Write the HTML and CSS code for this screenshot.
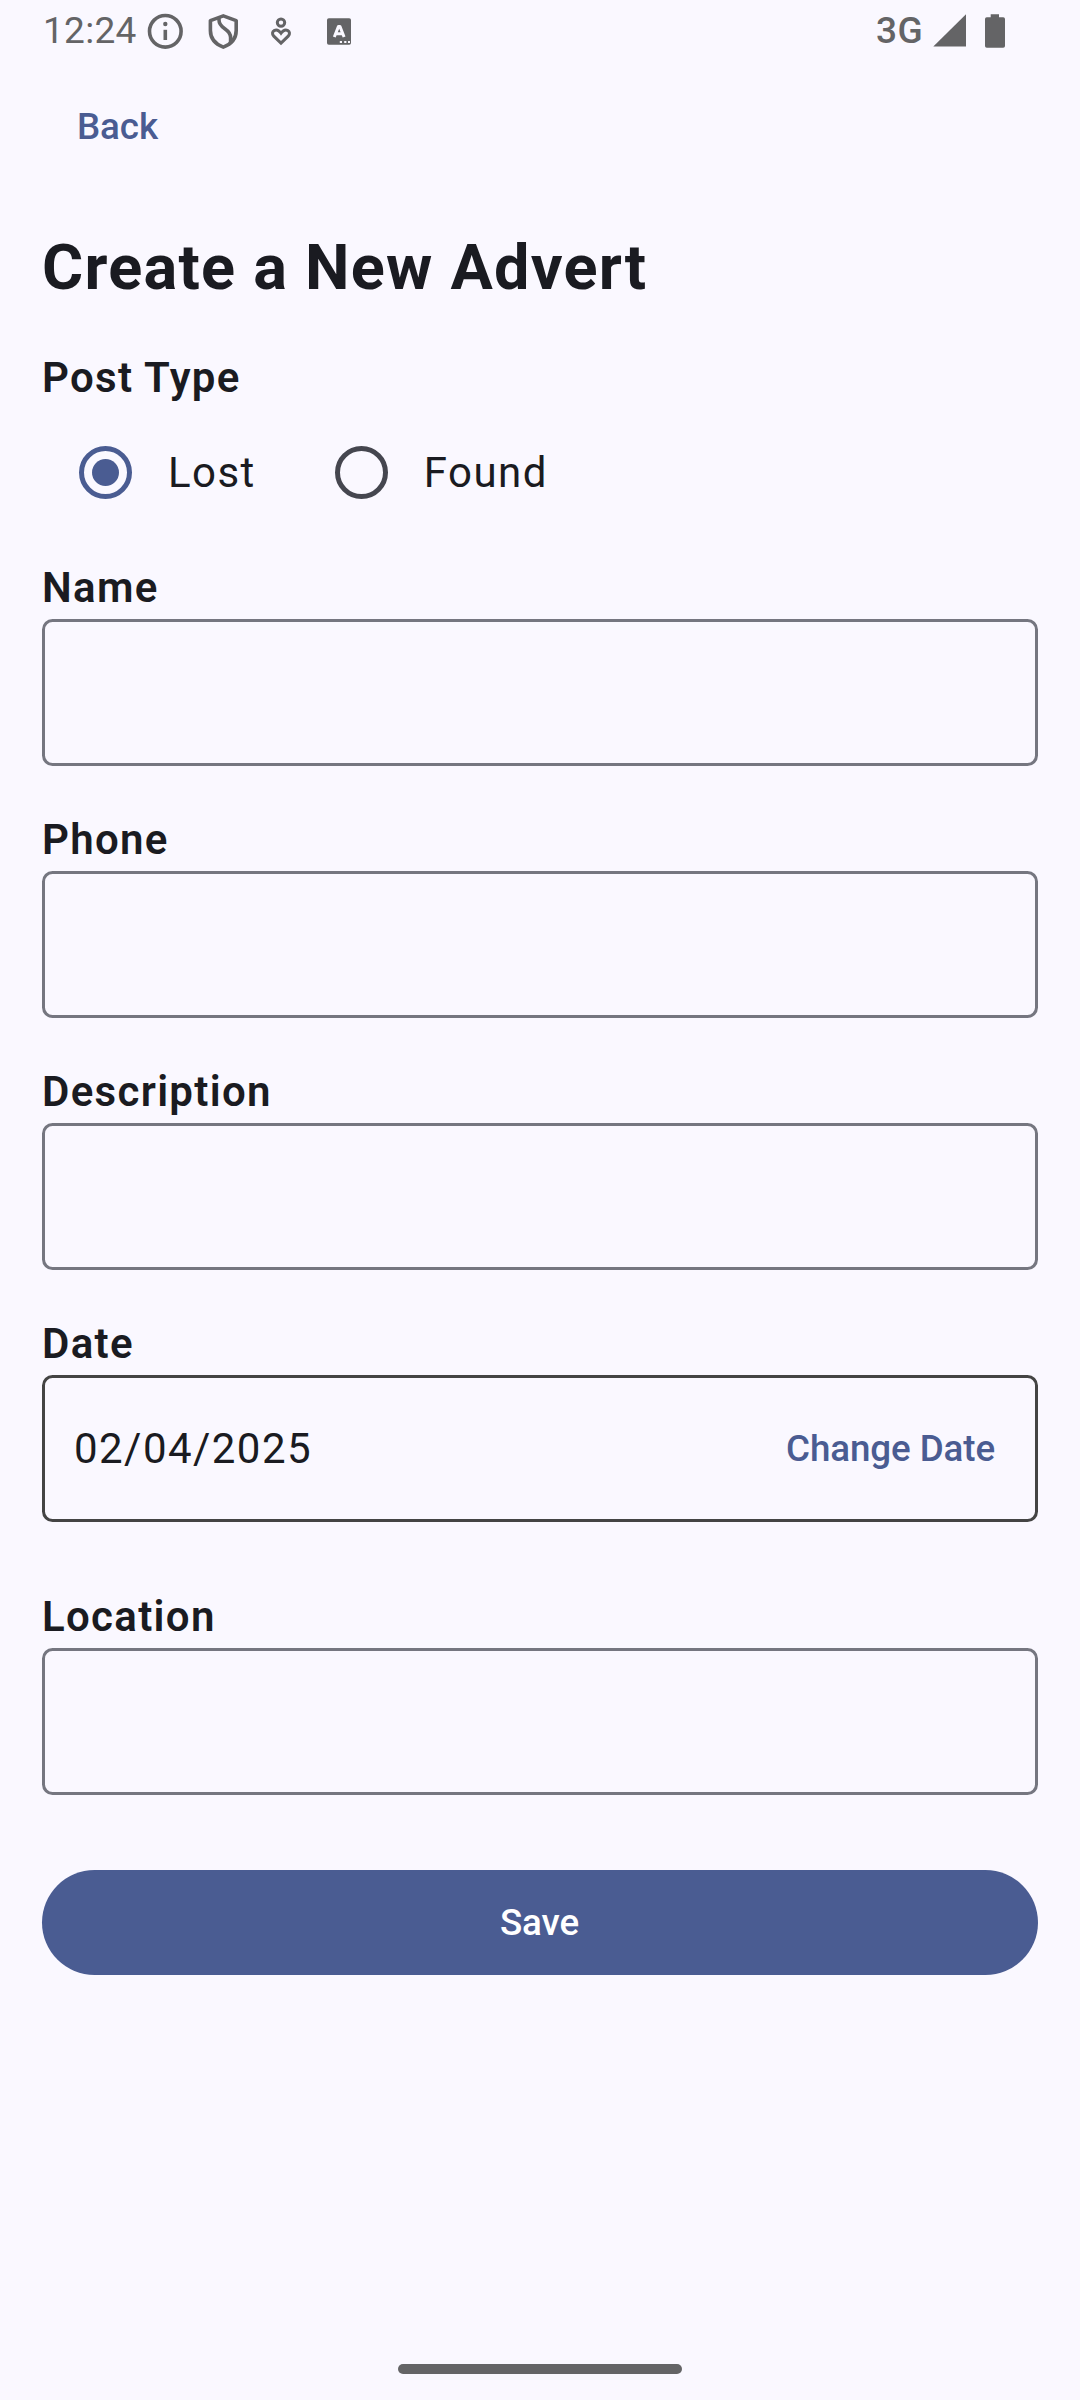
FILE: index.html
```html
<!DOCTYPE html>
<html lang="en">
<head>
<meta charset="utf-8">
<title>Create a New Advert</title>
<link rel="stylesheet" href="styles.css">
</head>
<body>
<div class="screen">
  <header class="status">
    <span class="time">12:24</span>
    <svg class="notifications" width="210" height="60" viewBox="0 0 210 60" aria-hidden="true">
      <g fill="none" stroke="#646466" stroke-width="3.6">
        <circle cx="19.3" cy="31.3" r="15.8"/>
        <path d="M77.3 15.9 90.2 20.6V30.5C90.2 38.5 85 44.2 77.3 47.1 69.6 44.2 64.4 38.5 64.4 30.5V20.6Z" stroke-linejoin="round"/>
        <path d="M73 17.6V20C73 29.5 84.6 28 84.6 37.5V42.2"/>
        <circle cx="135" cy="22.6" r="3.7" stroke-width="3"/>
        <path d="M135 43.2 127.8 36.2C123.6 31.5 130.5 27 135 33.2 139.500 27 146.400 31.500 142.200 36.200Z" stroke-width="3"/>
      </g>
      <g fill="#646466">
        <circle cx="19.3" cy="24" r="2.2"/>
        <rect x="17.500" y="29.800" width="3.600" height="10.200"/>
        <rect x="181" y="18.300" width="24" height="26.500" rx="1.800"/>
      </g>
      <path d="M188.300 37 192.500 26.400H193.900L198.100 37M189.900 33.800H196.500" fill="none" stroke="#faf8ff" stroke-width="3" stroke-linejoin="round"/>
      <path d="M193.800 41.900H196M198.200 41.900H200.400M202 41.900H204" stroke="#faf8ff" stroke-width="2"/>
    </svg>
    <span class="network">3G</span>
    <svg class="indicators" width="76" height="60" viewBox="0 0 76 60" fill="#646466" aria-hidden="true">
      <path d="M3.300 46.600 36 14.300V46.600Z"/>
      <path d="M60.700 14.200H69V17.300H73.200Q75 17.300 75 19.100V46Q75 47.800 73.200 47.800H56.800Q55 47.800 55 46V19.100Q55 17.300 56.800 17.300H60.700Z"/>
    </svg>
  </header>

  <button class="text-button back" type="button">Back</button>

  <main class="form">
    <h1 class="title">Create a New Advert</h1>
    <div class="label">Post Type</div>
    <div class="radios">
      <div class="option"><span class="radio radio-on"></span><span>Lost</span></div>
      <div class="option"><span class="radio"></span><span>Found</span></div>
    </div>
    <div class="field"><div class="label">Name</div><div class="box"></div></div>
    <div class="field"><div class="label">Phone</div><div class="box"></div></div>
    <div class="field"><div class="label">Description</div><div class="box"></div></div>
    <div class="field field-date">
      <div class="label">Date</div>
      <div class="box box-date">
        <span>02/04/2025</span>
        <button class="text-button" type="button">Change Date</button>
      </div>
    </div>
    <div class="field"><div class="label">Location</div><div class="box"></div></div>
    <button class="save" type="button">Save</button>
  </main>
  <div class="home-bar"></div>
</div>
</body>
</html>
```
FILE: styles.css
```css
* {
  box-sizing: border-box;
}

body {
  margin: 0;
  background: #faf8ff;
}

.screen {
  display: flex;
  flex-direction: column;
  width: 1080px;
  height: 2400px;
  padding-bottom: 26px;
  background: #faf8ff;
  color: #1a1b21;
  font: 400 42px/63px Roboto, sans-serif;
  letter-spacing: 1.45px;
}

.status {
  display: flex;
  height: 63px;
  padding: 0 74px 0 43px;
  color: #646466;
  font-size: 37px;
  line-height: 62px;
  letter-spacing: 0.3px;
}

.time {
  width: 103px;
}

.network {
  margin-left: auto;
  width: 54px;
  font-weight: 500;
  letter-spacing: 0.5px;
}

.text-button,
.save {
  padding: 0;
  border: 0;
  background: none;
  color: #4a5c92;
  font: 500 36.75px/52.5px Roboto, sans-serif;
  letter-spacing: -0.1px;
}

.back {
  align-self: flex-start;
  margin: 38px 0 0 77px;
}

.form {
  display: flex;
  flex-direction: column;
  padding: 82px 42px 0;
}

.title {
  margin: 0 0 47px;
  font-size: 63px;
  font-weight: 700;
  line-height: 63px;
  letter-spacing: 1.25px;
}

.label {
  font-weight: 600;
  letter-spacing: 1.3125px;
}

.radios {
  display: flex;
  gap: 79px;
  height: 126px;
  margin-bottom: 21px;
  padding: 2px 0 0 37px;
}

.option {
  display: flex;
  align-items: center;
  gap: 36px;
}

.radio {
  display: grid;
  place-items: center;
  width: 53px;
  height: 53px;
  border: 5.25px solid #45464f;
  border-radius: 50%;
}

.radio-on {
  border-color: #4a5c92;
}

.radio-on::before {
  content: "";
  width: 27px;
  height: 27px;
  border-radius: 50%;
  background: #4a5c92;
}

.field {
  margin-bottom: 42px;
}

.field-date {
  margin-bottom: 63px;
}

.box {
  height: 147px;
  border: 3px solid #757680;
  border-radius: 10.5px;
}

.box-date {
  display: flex;
  align-items: center;
  justify-content: space-between;
  padding: 0 40px 0 29px;
  border-color: #444;
}

.box-date .text-button {
  padding-top: 2px;
}

.save {
  height: 105px;
  margin-top: 33px;
  padding: 2px 1px 0 0;
  border-radius: 53px;
  background: #4a5c92;
  color: #fff;
}

.home-bar {
  width: 284px;
  height: 10px;
  margin: auto auto 0;
  border-radius: 5px;
  background: #646466;
}
```
